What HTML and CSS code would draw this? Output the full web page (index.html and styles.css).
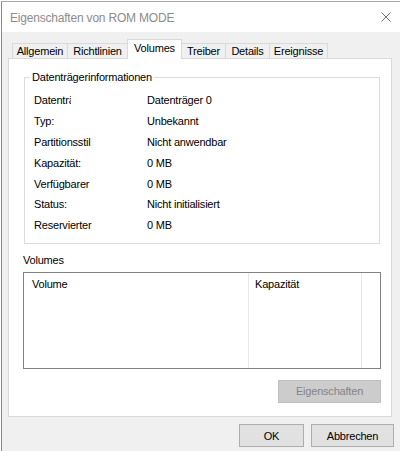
FILE: index.html
```html
<!DOCTYPE html>
<html lang="de">
<head>
    <meta charset="UTF-8">
    <meta name="viewport" content="width=device-width, initial-scale=1.0">
    <title>Eigenschaften von ROM MODE</title>
    <link rel="stylesheet" href="styles.css">
</head>
<body>
    <div class="backdrop"></div>
    <div class="window">
        <div class="titlebar">
            <span class="title">Eigenschaften von ROM MODE</span>
            <svg class="close" width="10" height="10" viewBox="0 0 10 10">
                <path d="M0.5 0.5 L9.5 9.5 M9.5 0.5 L0.5 9.5" stroke="#6f6f6f" stroke-width="1" fill="none"/>
            </svg>
        </div>
        <div class="client">
            <!-- Registerkarten -->
            <div class="tabs">
                <div class="tab tab-allgemein">Allgemein</div>
                <div class="tab tab-richtlinien">Richtlinien</div>
                <div class="tab tab-volumes active">Volumes</div>
                <div class="tab tab-treiber">Treiber</div>
                <div class="tab tab-details">Details</div>
                <div class="tab tab-ereignisse">Ereignisse</div>
            </div>
            <div class="panel">
                <div class="group">
                    <span class="group-title">Datenträgerinformationen</span>
                    <div class="info">
                        <span class="label clipped">Datenträger:</span><span>Datenträger 0</span>
                        <span class="label">Typ:</span><span>Unbekannt</span>
                        <span class="label">Partitionsstil</span><span>Nicht anwendbar</span>
                        <span class="label">Kapazität:</span><span>0 MB</span>
                        <span class="label">Verfügbarer</span><span>0 MB</span>
                        <span class="label">Status:</span><span>Nicht initialisiert</span>
                        <span class="label">Reservierter</span><span>0 MB</span>
                    </div>
                </div>
                <div class="volumes-label">Volumes</div>
                <div class="listview">
                    <div class="col col-volume">Volume</div>
                    <div class="col col-size">Kapazität</div>
                    <div class="col col-rest"></div>
                </div>
                <div class="panel-actions">
                    <button class="btn btn-props" disabled>Eigenschaften</button>
                </div>
            </div>
            <div class="dialog-buttons">
                <button class="btn btn-ok">OK</button>
                <button class="btn btn-cancel">Abbrechen</button>
            </div>
        </div>
    </div>
</body>
</html>
```

FILE: styles.css
```css
* {
    box-sizing: border-box;
    margin: 0;
    padding: 0;
}
body {
    width: 400px;
    height: 451px;
    overflow: hidden;
    background-color: #fff;
    font-family: "Liberation Sans", Arial, sans-serif;
    font-size: 11px;
    letter-spacing: -0.2px;
    color: #000;
}
.backdrop {
    height: 1px;
    background-color: #fff;
}
.window {
    height: 450px;
    margin-left: 1px;
    border-top: 1px solid #a8a8a8;
    border-left: 1px solid #8a8a8a;
    background-color: #f0f0f0;
}
.titlebar {
    display: flex;
    align-items: center;
    justify-content: space-between;
    height: 30px;
    padding: 0 9px 0 8px;
    background-color: #fff;
    .title {
        font-size: 12px;
        color: #8c8c8c;
        padding-top: 1px;
    }
    .close {
        display: block;
    }
}
.client {
    padding: 7px 0 0 6px;
}
.tabs {
    position: relative;
    z-index: 1;
    display: flex;
    align-items: flex-end;
    height: 19px;
    padding-left: 4px;
    .tab {
        height: 15px;
        line-height: 14px;
        text-align: center;
        border: 1px solid #d9d9d9;
        border-bottom: none;
        background-color: #f0f0f0;
        margin-left: -1px;
    }
    .tab:first-child {
        margin-left: 0;
    }
    .active {
        position: relative;
        z-index: 2;
        height: 20px;
        line-height: 16px;
        margin-bottom: -1px;
        background-color: #fff;
    }
    .tab-allgemein { width: 56px; }
    .tab-richtlinien { width: 61px; }
    .tab-volumes { width: 55px; }
    .tab-treiber { width: 45px; }
    .tab-details { width: 45px; }
    .tab-ereignisse { width: 59px; }
}
.panel {
    width: 384px;
    height: 359px;
    border: 1px solid #d9d9d9;
    background-color: #fff;
}
.group {
    margin: 18px 11px 0 15px;
    padding-bottom: 7px;
    border: 1px solid #dcdcdc;
    .group-title {
        display: block;
        width: fit-content;
        margin: -7px 0 0 5px;
        padding: 0 2px;
        line-height: 13px;
        background-color: #fff;
    }
    .info {
        display: grid;
        grid-template-columns: 113px 1fr;
        grid-auto-rows: 20.8px;
        align-items: center;
        margin-top: 6px;
        padding-left: 9px;
        white-space: nowrap;
    }
    .clipped {
        display: block;
        width: 37px;
        overflow: hidden;
    }
}
.volumes-label {
    margin: 10px 0 0 14px;
    line-height: 13px;
}
.listview {
    display: flex;
    height: 97px;
    margin: 5px 10px 0 14px;
    border: 1px solid #828282;
    .col {
        line-height: 22px;
        border-right: 1px solid #e8e8e8;
    }
    .col-volume {
        width: 225px;
        padding-left: 8px;
    }
    .col-size {
        width: 113px;
        padding-left: 6px;
    }
    .col-rest {
        flex: 1;
        border-right: none;
    }
}
.btn {
    height: 23px;
    font-family: inherit;
    font-size: 11px;
    letter-spacing: -0.2px;
    color: #000;
    background-color: #e1e1e1;
    border: 1px solid #adadad;
}
.btn:disabled {
    color: #838383;
    background-color: #cccccc;
    border-color: #bfbfbf;
}
.panel-actions {
    display: flex;
    justify-content: flex-end;
    margin: 11px 10px 0 0;
    .btn-props {
        width: 103px;
    }
}
.dialog-buttons {
    display: flex;
    justify-content: flex-end;
    gap: 7px;
    margin-top: 7px;
    padding-right: 6px;
    .btn-ok {
        width: 65px;
    }
    .btn-cancel {
        width: 83px;
    }
}
```
